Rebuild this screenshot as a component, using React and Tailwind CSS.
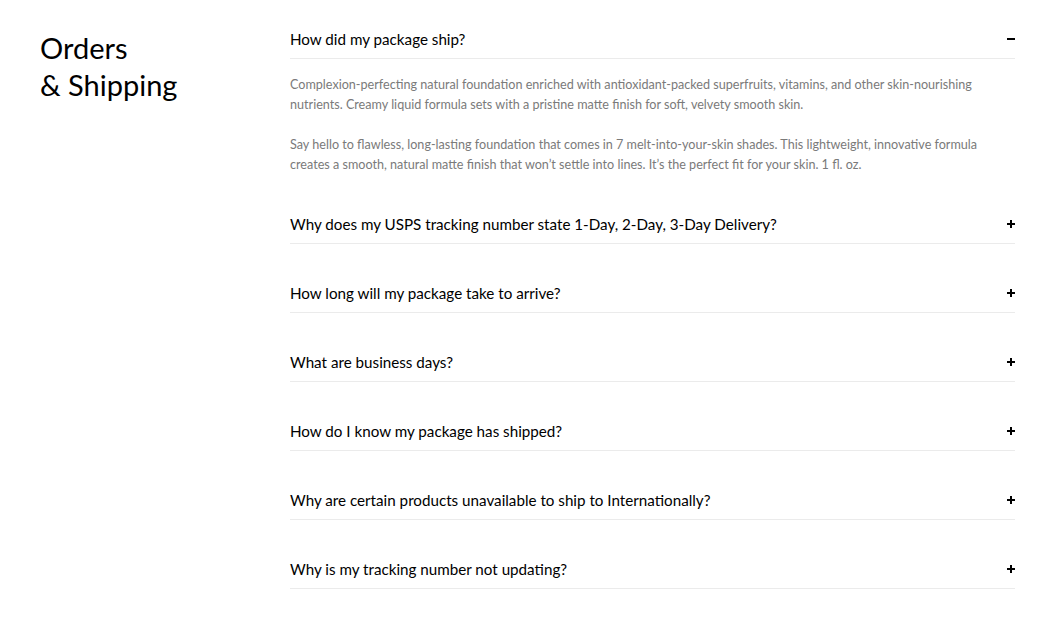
import React, { useState } from "react";

const faqs = [
  {
    q: "How did my package ship?",
    a: [
      "Complexion-perfecting natural foundation enriched with antioxidant-packed superfruits, vitamins, and other skin-nourishing nutrients. Creamy liquid formula sets with a pristine matte finish for soft, velvety smooth skin.",
      "Say hello to flawless, long-lasting foundation that comes in 7 melt-into-your-skin shades. This lightweight, innovative formula creates a smooth, natural matte finish that won\u2019t settle into lines. It\u2019s the perfect fit for your skin. 1 fl. oz.",
    ],
  },
  { q: "Why does my USPS tracking number state 1-Day, 2-Day, 3-Day Delivery?" },
  { q: "How long will my package take to arrive?" },
  { q: "What are business days?" },
  { q: "How do I know my package has shipped?" },
  { q: "Why are certain products unavailable to ship to Internationally?" },
  { q: "Why is my tracking number not updating?" },
];

function Toggle({ open }) {
  return (
    <span className="relative w-[8px] h-[8px] shrink-0">
      <span className="absolute left-0 top-[3px] w-[8px] h-[2px] bg-black" />
      {!open && <span className="absolute left-[3px] top-0 w-[2px] h-[8px] bg-black" />}
    </span>
  );
}

export default function App() {
  const [openIdx, setOpenIdx] = useState(0);

  return (
    <div className="min-h-screen bg-white font-['Lato',sans-serif] text-black">
      <div className="flex pl-[40px] pr-[47px] pt-[28px]">
        <div className="w-[250px] shrink-0">
          <h2 className="text-[29px] leading-[37px] font-normal mt-[1px]">
            Orders
            <br />& Shipping
          </h2>
        </div>

        <div className="flex-1">
          {faqs.map((item, i) => {
            const open = openIdx === i;
            return (
              <div key={i} className={i === 0 ? "" : "pt-[38px]"}>
                <button
                  onClick={() => setOpenIdx(open ? -1 : i)}
                  className="w-full flex items-center justify-between pb-[8px] border-b border-[#ebebeb] text-left"
                >
                  <span className="text-[15.2px] leading-[22px]">{item.q}</span>
                  <Toggle open={open} />
                </button>
                {open && item.a && (
                  <div className="pt-[16px] text-[12.6px] leading-[20px] text-[#7a7a7a] flex flex-col gap-[20px]">
                    {item.a.map((p, j) => (
                      <p key={j}>{p}</p>
                    ))}
                  </div>
                )}
              </div>
            );
          })}
        </div>
      </div>
    </div>
  );
}
